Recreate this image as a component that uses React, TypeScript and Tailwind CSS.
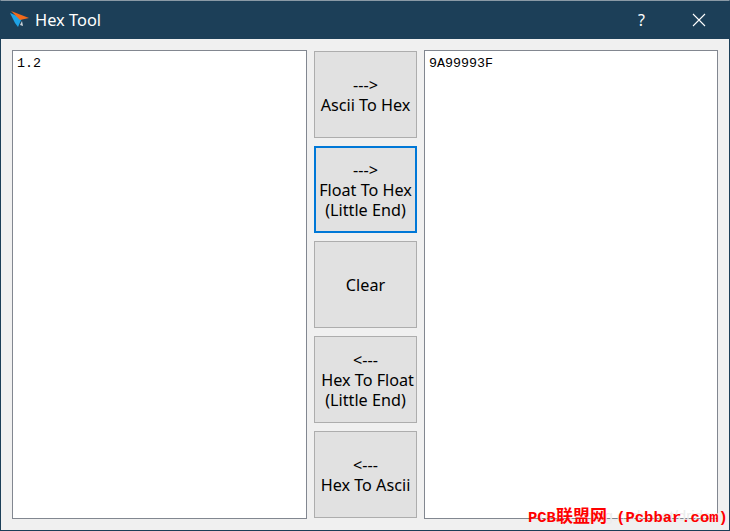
import React from 'react';

const buttons = [
  { lines: ['--->', 'Ascii To Hex'], focused: false },
  { lines: ['--->', 'Float To Hex', '(Little End)'], focused: true },
  { lines: ['Clear'], focused: false },
  { lines: ['<---', ' Hex To Float', '(Little End)'], focused: false },
  { lines: ['<---', 'Hex To Ascii'], focused: false },
];

const AppIcon = () => (
  <svg width="20" height="18" viewBox="0 0 20 18" className="shrink-0">
    <path d="M0 2 L12 7 L8 16 L5 12 Z" fill="#1ea3e6" />
    <path d="M1 0 L19 7 L10 9 Z" fill="#f26a1b" />
    <path d="M10 14 L12 10 L13 15 Z" fill="#c9d3da" />
  </svg>
);

const TextPane = ({ value, className }: { value: string; className: string }) => (
  <div
    className={`h-[469px] border border-[#828790] bg-white pt-[5px] font-['Liberation_Mono','DejaVu_Sans_Mono',monospace] text-[13.33px] leading-[16px] text-black ${className}`}
  >
    {value}
  </div>
);

export default function App() {
  return (
    <div className="relative h-[531px] w-[730px] overflow-hidden border border-[#1c3f58] border-t-[#8a9aa6] bg-[#f0f0f0] font-['Noto_Sans','Liberation_Sans',sans-serif]">
      {/* Title bar */}
      <div className="flex h-[38px] items-center bg-[#1c3f58] pl-[9px] text-white">
        <AppIcon />
        <span className="ml-[5px] text-[16.4px]">Hex Tool</span>
        <span className="ml-auto mr-[47px] text-[16px]">?</span>
        <svg width="14" height="14" viewBox="0 0 14 14" className="mr-[23px]">
          <path d="M1 1 L13 13 M13 1 L1 13" stroke="#fff" strokeWidth="1.1" fill="none" />
        </svg>
      </div>

      {/* Body */}
      <div className="flex pl-[11px] pt-[11px]">
        <TextPane value="1.2" className="w-[295px] pl-[4px]" />
        <div className="ml-[7px] mt-[1px] flex w-[103px] flex-col gap-[8px]">
          {buttons.map((b) => (
            <button
              key={b.lines.join('-')}
              className={`flex h-[87px] w-[103px] flex-col items-center justify-center bg-[#e1e1e1] text-[16.2px] leading-[20px] text-black ${
                b.focused ? 'border-2 border-[#0078d7]' : 'border border-[#adadad]'
              }`}
            >
              {b.lines.map((l) => (
                <span key={l} className="whitespace-pre">
                  {l}
                </span>
              ))}
            </button>
          ))}
        </div>
        <TextPane value="9A99993F" className="ml-[7px] w-[294px] pl-[4px]" />
      </div>

      {/* Watermark */}
      <div className="absolute bottom-[4px] right-[7px] whitespace-nowrap font-['Liberation_Sans',sans-serif] text-[15px] leading-[20px] text-[#ececec]">
        https://blog.csdn.net/dridow
      </div>
      <div className="absolute bottom-[2px] left-[527px] whitespace-pre font-['Liberation_Mono','Noto_Sans_CJK_SC',monospace] text-[15.5px] font-bold leading-[20px] text-[#ff0000]">
        PCB<span className="text-[17px]">联盟网</span> (Pcbbar.com)
      </div>
    </div>
  );
}
